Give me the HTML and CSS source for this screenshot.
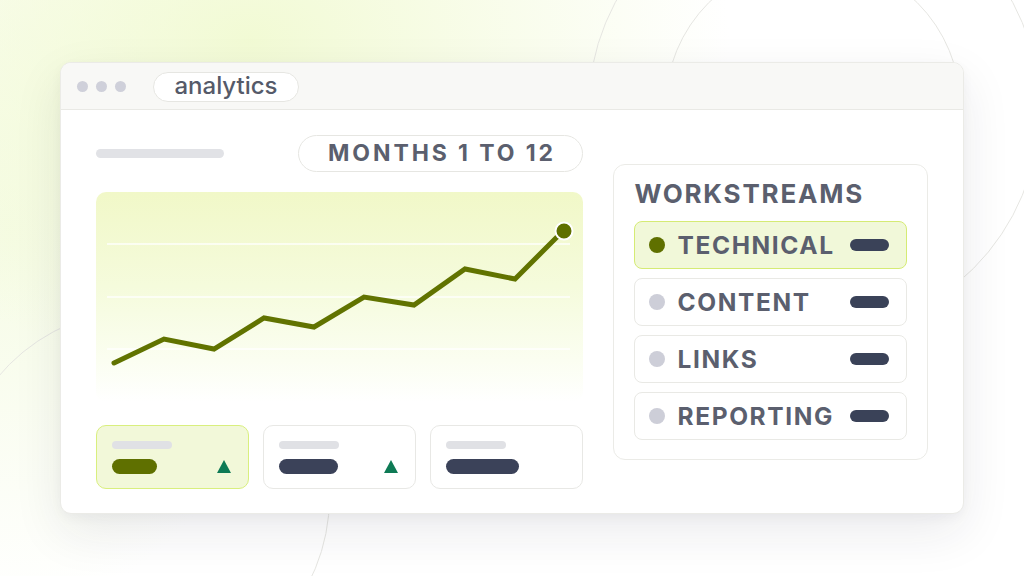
FILE: index.html
```html
<!DOCTYPE html>
<html lang="en">
<head>
<meta charset="utf-8">
<title>analytics</title>
<link rel="stylesheet" href="styles.css">
</head>
<body>
<div class="stage">
  <div class="ring ring-outer"></div>
  <div class="ring ring-inner"></div>
  <div class="ring ring-left"></div>

  <div class="window">
    <div class="titlebar">
      <div class="dots"><span class="dot"></span><span class="dot"></span><span class="dot"></span></div>
      <div class="tab">analytics</div>
    </div>
    <div class="content">
      <div class="main">
        <div class="toprow">
          <div class="skel-bar"></div>
          <div class="range">MONTHS 1 TO 12</div>
        </div>
        <div class="chart">
          <svg width="487" height="210" viewBox="0 0 487 210" xmlns="http://www.w3.org/2000/svg">
            <line x1="11" y1="52" x2="474" y2="52" stroke="#ffffff" stroke-width="1.5" stroke-opacity="0.9"/>
            <line x1="11" y1="105" x2="474" y2="105" stroke="#ffffff" stroke-width="1.5" stroke-opacity="0.9"/>
            <line x1="11" y1="157" x2="474" y2="157" stroke="#ffffff" stroke-width="1.5" stroke-opacity="0.9"/>
            <polyline points="18,171 68,147 118,157 168,126 218,135 268,105 318,113 369,77 419,87 462,44" fill="none" stroke="#617300" stroke-width="5" stroke-linecap="round" stroke-linejoin="miter"/>
            <circle cx="468" cy="39" r="8.5" fill="#5f7000" stroke="#ffffff" stroke-width="2"/>
          </svg>
        </div>
        <div class="cards">
          <div class="card card-active">
            <div class="card-label"></div>
            <div class="card-row"><span class="val val-olive w45"></span><span class="tri"></span></div>
          </div>
          <div class="card">
            <div class="card-label"></div>
            <div class="card-row"><span class="val w59"></span><span class="tri"></span></div>
          </div>
          <div class="card">
            <div class="card-label"></div>
            <div class="card-row"><span class="val w73"></span></div>
          </div>
        </div>
      </div>
      <div class="panel">
        <div class="panel-title">WORKSTREAMS</div>
        <div class="rows">
          <div class="row row-active"><span class="rdot"></span><span class="rlabel">TECHNICAL</span><span class="rdash"></span></div>
          <div class="row"><span class="rdot"></span><span class="rlabel">CONTENT</span><span class="rdash"></span></div>
          <div class="row"><span class="rdot"></span><span class="rlabel">LINKS</span><span class="rdash"></span></div>
          <div class="row"><span class="rdot"></span><span class="rlabel">REPORTING</span><span class="rdash"></span></div>
        </div>
      </div>
    </div>
  </div>
</div>
</body>
</html>
```

FILE: styles.css
```css
* { box-sizing: border-box; }
html, body { margin: 0; padding: 0; }
body {
  width: 1024px;
  height: 576px;
  overflow: hidden;
  background: #ffffff;
  font-family: Inter, "Noto Sans", "Liberation Sans", sans-serif;
}
.stage {
  position: relative;
  width: 1024px;
  height: 576px;
  overflow: hidden;
  padding: 62px 60px 0 60px;
  background:
    radial-gradient(ellipse 480px 330px at 250px 40px, rgba(241, 250, 210, 0.95), rgba(255,255,255,0) 100%),
    radial-gradient(ellipse 280px 380px at 10px 230px, rgba(244, 251, 224, 0.85), rgba(255,255,255,0) 100%),
    #ffffff;
}
.ring {
  position: absolute;
  border-radius: 50%;
  border: 1.5px solid #e6e6e2;
  z-index: 0;
}
.ring-outer { left: 588px; top: -117px; width: 452px; height: 452px; }
.ring-inner { left: 665px; top: -41px; width: 296px; height: 296px; }
.ring-left { left: -46px; top: 309px; width: 376px; height: 376px; }

.window {
  position: relative;
  z-index: 1;
  width: 904px;
  height: 452px;
  background: #ffffff;
  border: 1px solid #ebebe7;
  border-radius: 11px;
  box-shadow: 0 18px 50px rgba(30, 32, 50, 0.09), 0 4px 12px rgba(30, 32, 50, 0.04);
  overflow: hidden;
  display: flex;
  flex-direction: column;
}
.titlebar {
  height: 47px;
  flex: none;
  background: #f8f8f6;
  border-bottom: 1px solid #e9e9e5;
  display: flex;
  align-items: center;
  padding: 1px 0 0 16px;
  gap: 27px;
}
.dots { display: flex; gap: 8px; }
.dot { width: 11px; height: 11px; border-radius: 50%; background: #cfd0da; display: block; }
.tab {
  height: 30px;
  width: 146px;
  border: 1.5px solid #e6e6e2;
  border-radius: 15px;
  background: #ffffff;
  color: #555a69;
  font-size: 24px;
  font-weight: 500;
  display: flex;
  align-items: center;
  justify-content: center;
  line-height: 1;
  padding-bottom: 2px;
}
.content {
  flex: 1;
  display: flex;
  padding: 25px 35px 0 35px;
  gap: 30px;
}
.main { width: 487px; display: flex; flex-direction: column; }
.toprow {
  height: 36px;
  display: flex;
  align-items: center;
  justify-content: space-between;
}
.skel-bar { width: 128px; height: 9px; border-radius: 5px; background: #e1e2e6; margin-top: 1px; }
.range {
  height: 37px;
  width: 285px;
  border: 1.5px solid #e6e6e2;
  border-radius: 19px;
  display: flex;
  align-items: center;
  justify-content: center;
  font-size: 23px;
  font-weight: 700;
  letter-spacing: 2.9px;
  padding-left: 3px;
  color: #5b5f6e;
  line-height: 1;
}
.chart {
  margin-top: 21px;
  height: 210px;
  border-radius: 10px;
  background: linear-gradient(180deg, #f1f8c8 0%, #f5fbdc 45%, #fbfef1 80%, #ffffff 100%);
}
.chart svg { display: block; }
.cards {
  margin-top: 23px;
  display: grid;
  grid-template-columns: repeat(3, 1fr);
  gap: 14px;
}
.card {
  height: 64px;
  border: 1.5px solid #e8e8e5;
  border-radius: 10px;
  background: #ffffff;
  padding: 14.5px 17px 0 15px;
  display: flex;
  flex-direction: column;
  gap: 10px;
}
.card-active { background: #f2f8d9; border-color: #d9ef7e; }
.card-label { width: 60px; height: 8px; border-radius: 4px; background: #e0e1e5; }
.card-row { display: flex; align-items: center; justify-content: space-between; height: 15px; }
.val { display: block; height: 15px; border-radius: 8px; background: #3b4259; }
.val-olive { background: #5f7000; }
.w45 { width: 45px; }
.w59 { width: 59px; }
.w73 { width: 73px; }
.tri {
  display: block;
  width: 0; height: 0;
  border-left: 7.5px solid transparent;
  border-right: 7.5px solid transparent;
  border-bottom: 13px solid #0e7a55;
}
.panel {
  margin-top: 29px;
  width: 315px;
  height: 296px;
  border: 1.5px solid #ebebe7;
  border-radius: 12px;
  padding: 14px 20px 0 19.5px;
}
.panel-title {
  font-size: 26px;
  line-height: 30px;
  font-weight: 700;
  letter-spacing: 1.8px;
  color: #5b5f6e;
  padding-left: 1px;
}
.rows { margin-top: 12px; display: flex; flex-direction: column; gap: 9px; }
.row {
  height: 48px;
  border: 1.5px solid #e9e9e5;
  border-radius: 8px;
  background: #ffffff;
  display: flex;
  align-items: center;
  padding: 0 17px 0 14px;
}
.row-active { background: #f1f8d9; border-color: #d5eb74; }
.rdot { width: 16px; height: 16px; border-radius: 50%; background: #cdced8; flex: none; }
.row-active .rdot { background: #5f7000; }
.rlabel {
  margin-left: 13px;
  font-size: 24.5px;
  font-weight: 700;
  letter-spacing: 1.6px;
  color: #5b5f6e;
  line-height: 1;
}
.rdash { margin-left: auto; width: 39px; height: 12px; border-radius: 6px; background: #3a4258; flex: none; }
```
